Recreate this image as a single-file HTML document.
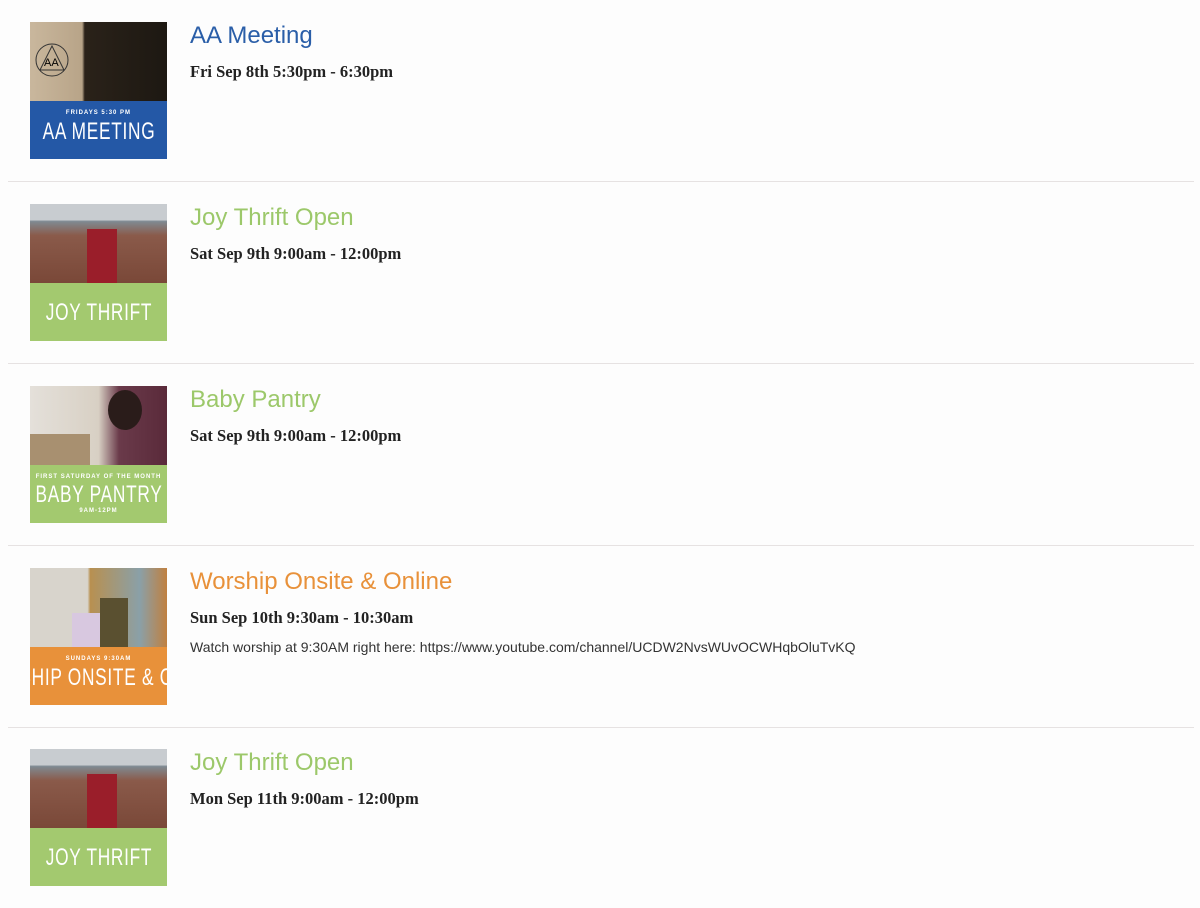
<!DOCTYPE html>
<html><head><style>
body{margin:0;background:#fdfdfd;width:1200px;height:904px;overflow:hidden;position:relative;font-family:"Liberation Sans",Arial,sans-serif}
.row{position:absolute;left:8px;width:1186px;height:181px;border-bottom:1px solid #e6e2e2}
.img{position:absolute;left:22px;top:22px;width:137px;height:137px;overflow:hidden}
.ph{position:absolute;left:0;top:0;width:137px;height:79px}
.bn{position:absolute;left:0;top:79px;width:137px;height:58px;color:#fff;text-align:center;overflow:hidden}
.sm{font-size:6px;font-weight:bold;letter-spacing:1px;margin-top:9px;height:8px}
.big{font-family:"Liberation Sans Narrow","Liberation Sans",sans-serif;font-size:24px;letter-spacing:1px;white-space:nowrap;line-height:28px;display:block;width:300px;margin-left:-81.5px;transform:scaleX(0.72);transform-origin:center}
.t{position:absolute;left:182px;top:22px;font-size:24px;white-space:nowrap}
.d{position:absolute;left:182px;top:62px;font-family:"Liberation Serif",serif;font-weight:bold;font-size:16.5px;color:#222;white-space:nowrap}
.x{position:absolute;left:182px;top:93px;font-size:14px;color:#333;white-space:nowrap}
</style></head><body>

<div class="row" style="top:0">
<div class="img"><div class="ph" style="background:linear-gradient(90deg,#c9b79d 0,#b8a488 38%,#2a2219 40%,#1d1812 100%)">
<svg width="60" height="79" style="position:absolute;left:2px;top:0"><circle cx="20" cy="38" r="16" fill="none" stroke="#333"/><polygon points="20,24 8,48 32,48" fill="none" stroke="#333"/><text x="12" y="44" font-size="11" font-family="Liberation Sans">AA</text></svg></div>
<div class="bn" style="background:#2458a6"><div class="sm">FRIDAYS 5:30 PM</div><div class="big">AA MEETING</div></div></div>
<div class="t" style="color:#2a5ea8">AA Meeting</div>
<div class="d">Fri Sep 8th 5:30pm - 6:30pm</div>
</div>

<div class="row" style="top:182px">
<div class="img"><div class="ph" style="background:linear-gradient(180deg,#c8ccd0 0,#c8ccd0 20%,#7f8a92 22%,#8a5a4a 40%,#7a4838 100%)">
<div style="position:absolute;left:57px;top:25px;width:30px;height:54px;background:#9a1e2a"></div></div>
<div class="bn" style="background:#a3c96f"><div class="big" style="margin-top:16px">JOY THRIFT</div></div></div>
<div class="t" style="color:#9cc86a">Joy Thrift Open</div>
<div class="d">Sat Sep 9th 9:00am - 12:00pm</div>
</div>

<div class="row" style="top:364px">
<div class="img"><div class="ph" style="background:linear-gradient(90deg,#e4e0da 0,#d8d0c4 50%,#6a3a4a 65%,#5a2a3a 100%)">
<div style="position:absolute;left:78px;top:4px;width:34px;height:40px;border-radius:50%;background:#2a1c1a"></div>
<div style="position:absolute;left:0;top:48px;width:60px;height:31px;background:#a89070"></div></div>
<div class="bn" style="background:#a3c96f"><div class="sm">FIRST SATURDAY OF THE MONTH</div><div class="big" style="line-height:26px">BABY PANTRY</div><div class="sm" style="margin-top:0">9AM-12PM</div></div></div>
<div class="t" style="color:#9cc86a">Baby Pantry</div>
<div class="d">Sat Sep 9th 9:00am - 12:00pm</div>
</div>

<div class="row" style="top:546px">
<div class="img"><div class="ph" style="background:linear-gradient(90deg,#d8d4cc 0,#d8d4cc 42%,#b89050 44%,#8aa0a8 80%,#c08040 100%)">
<div style="position:absolute;left:42px;top:45px;width:30px;height:34px;background:#d8c8e0"></div>
<div style="position:absolute;left:70px;top:30px;width:28px;height:49px;background:#5a5030"></div></div>
<div class="bn" style="background:#e8913a"><div class="sm">SUNDAYS 9:30AM</div><div style="position:relative;height:28px"><div class="big" style="position:absolute;left:-55px;margin-left:0;width:auto;transform-origin:left;">WORSHIP ONSITE &amp; ONLINE</div></div></div></div>
<div class="t" style="color:#e8913a">Worship Onsite &amp; Online</div>
<div class="d">Sun Sep 10th 9:30am - 10:30am</div>
<div class="x">Watch worship at 9:30AM right here: https://www.youtube.com/channel/UCDW2NvsWUvOCWHqbOluTvKQ</div>
</div>

<div class="row" style="top:727px;border-bottom:none">
<div class="img"><div class="ph" style="background:linear-gradient(180deg,#c8ccd0 0,#c8ccd0 20%,#7f8a92 22%,#8a5a4a 40%,#7a4838 100%)">
<div style="position:absolute;left:57px;top:25px;width:30px;height:54px;background:#9a1e2a"></div></div>
<div class="bn" style="background:#a3c96f"><div class="big" style="margin-top:16px">JOY THRIFT</div></div></div>
<div class="t" style="color:#9cc86a">Joy Thrift Open</div>
<div class="d">Mon Sep 11th 9:00am - 12:00pm</div>
</div>

</body></html>
